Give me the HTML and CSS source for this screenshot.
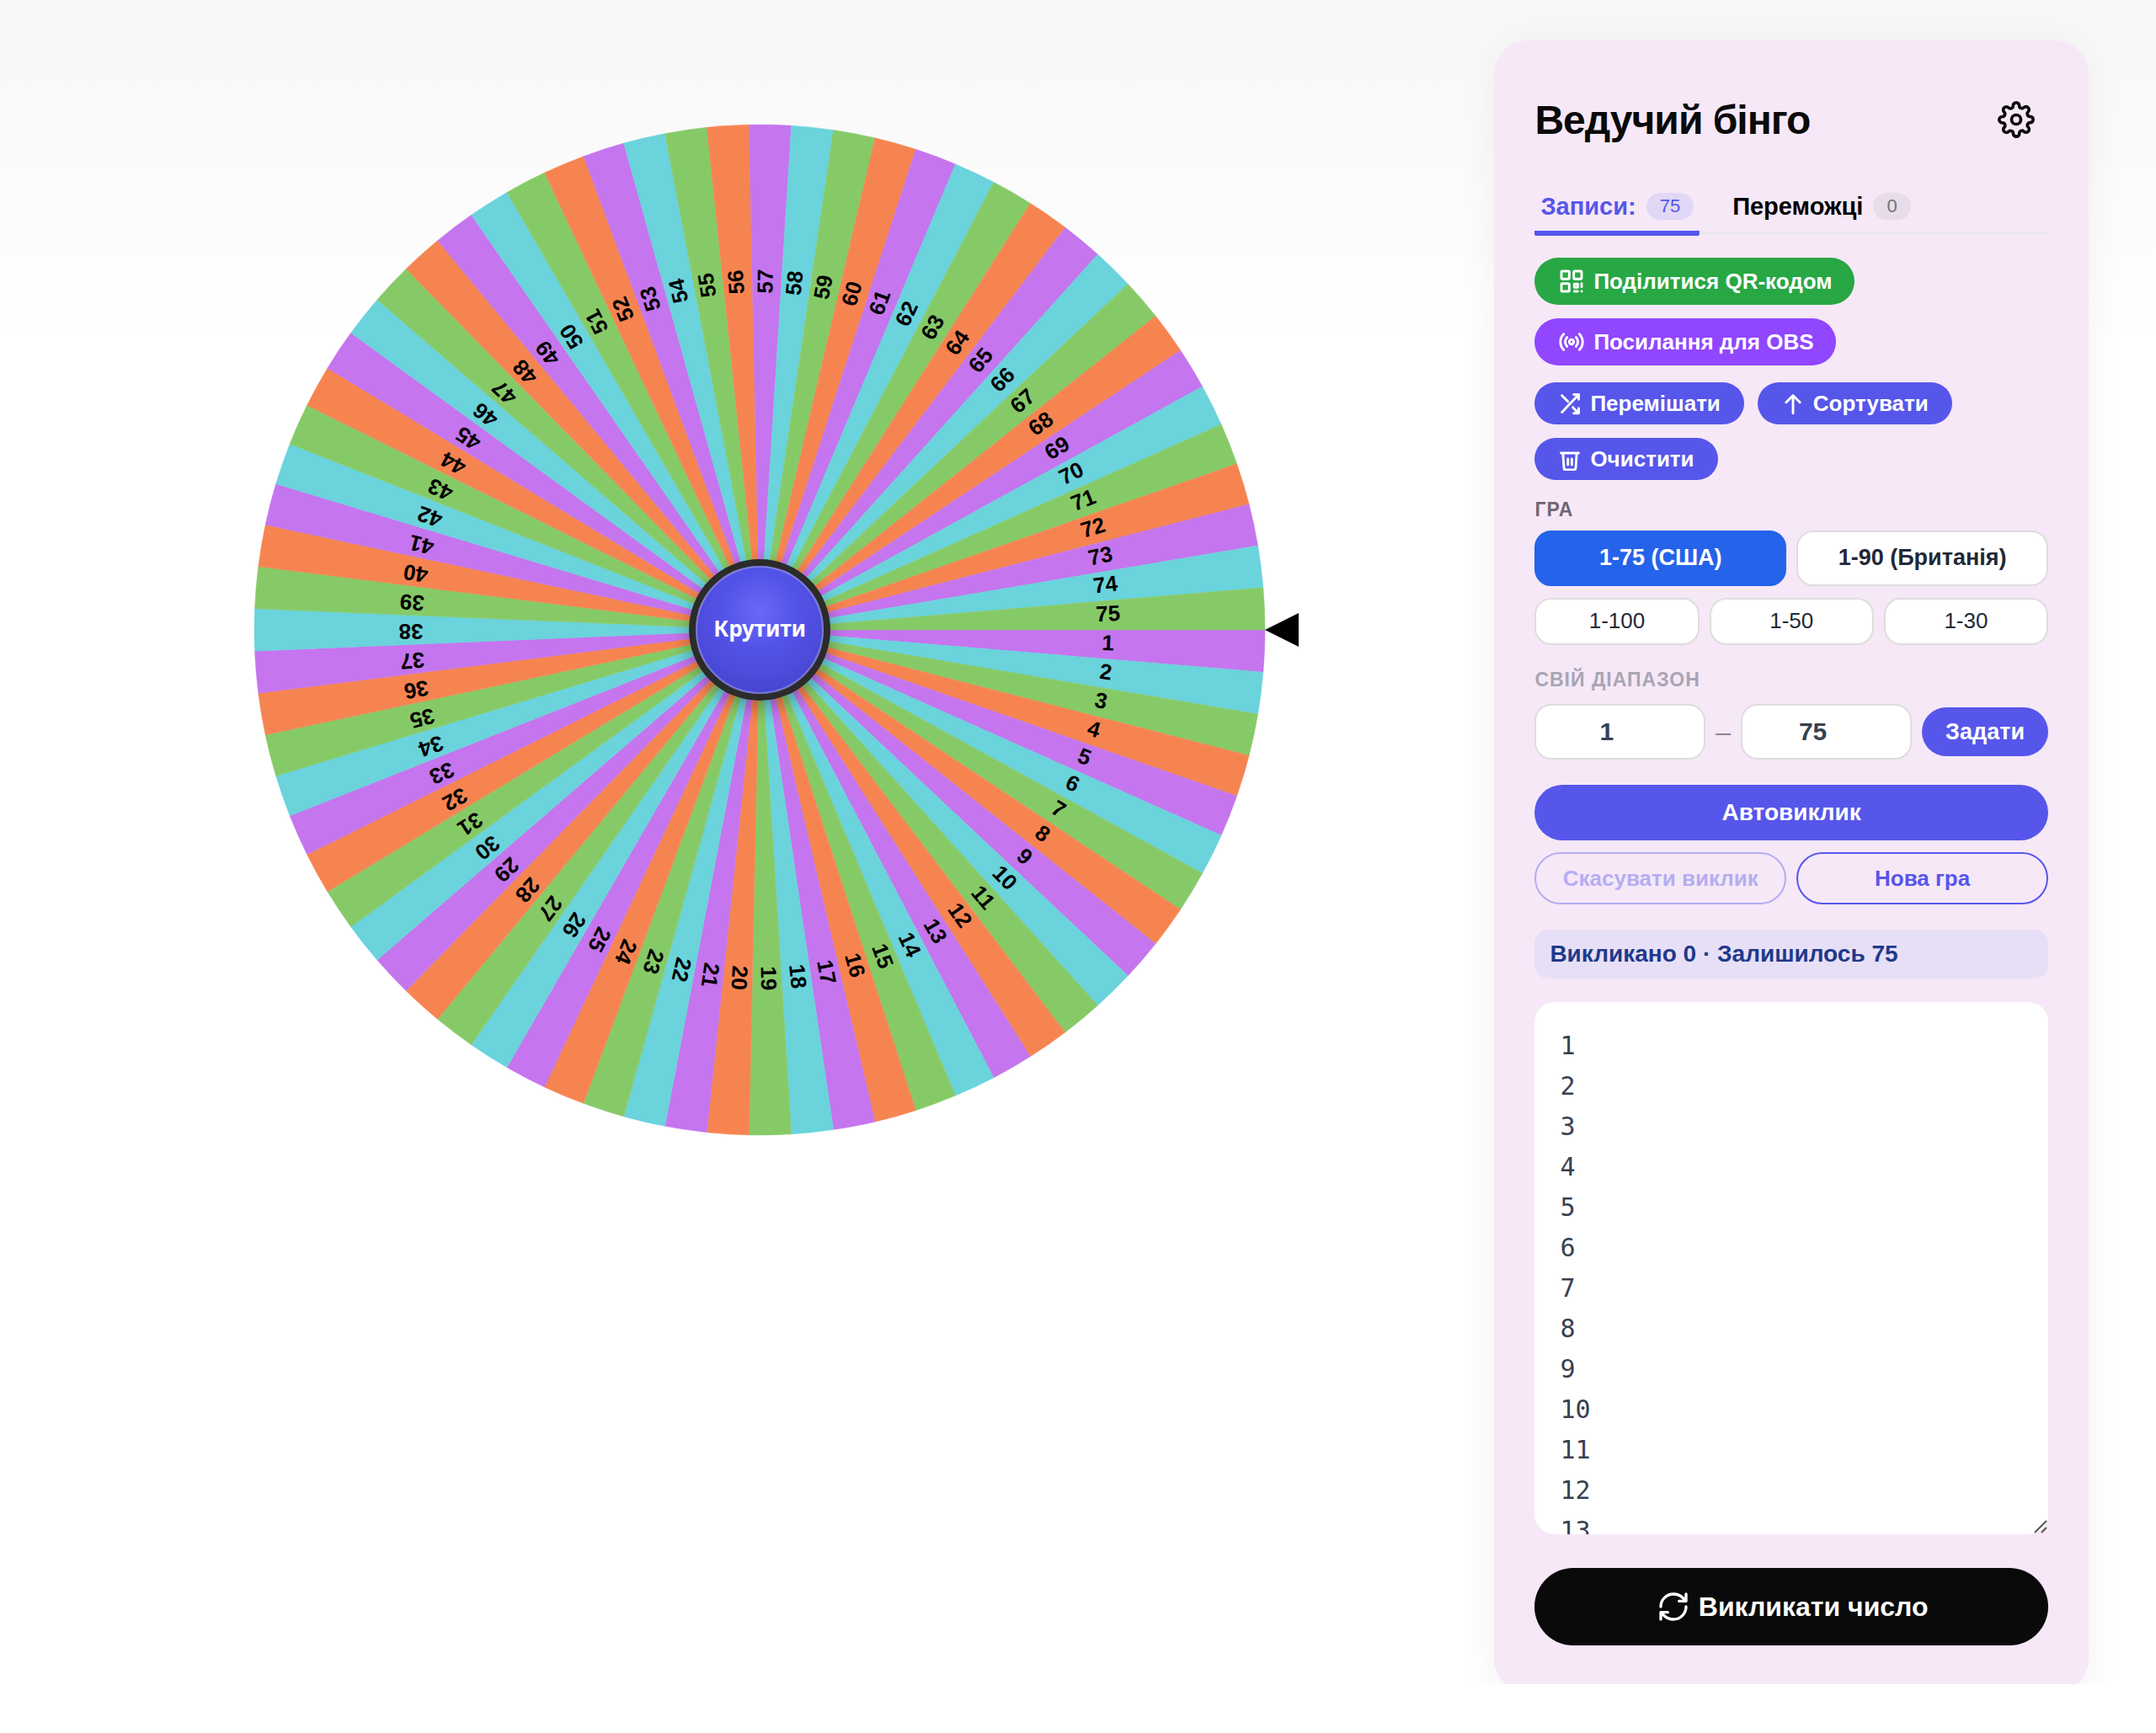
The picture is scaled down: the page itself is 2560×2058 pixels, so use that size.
FILE: index.html
```html
<!DOCTYPE html>
<html lang="uk">
	<head>
		<meta charset="UTF-8" />
		<meta name="viewport" content="width=device-width, initial-scale=1.0" />
		<title>Ведучий бінго</title>
		<link rel="stylesheet" href="styles.css">
	</head>
	<body>
		<main class="layout">
			<section class="stage">
				<div class="wheel-wrap">
					<svg class="wheel" id="wheel" viewBox="-600 -600 1200 1200">
						<g id="segments"></g>
						<path class="pointer" d="M600 0 L640 -20 L640 20 Z" />
					</svg>
					<button class="spin" type="button">Крутити</button>
				</div>
			</section>
			<aside class="panel">
				<header class="panel-header">
					<h1>Ведучий бінго</h1>
					<button class="settings" type="button" aria-label="Налаштування">
						<svg class="icon icon-gear" viewBox="0 0 24 24">
							<circle cx="12" cy="12" r="3" />
							<path d="M19.4 15a1.65 1.65 0 0 0 .33 1.82l.06.06a2 2 0 0 1 0 2.83 2 2 0 0 1-2.83 0l-.06-.06a1.65 1.65 0 0 0-1.82-.33 1.65 1.65 0 0 0-1 1.51V21a2 2 0 0 1-2 2 2 2 0 0 1-2-2v-.09A1.65 1.65 0 0 0 9 19.4a1.65 1.65 0 0 0-1.82.33l-.06.06a2 2 0 0 1-2.83 0 2 2 0 0 1 0-2.83l.06-.06a1.65 1.65 0 0 0 .33-1.82 1.65 1.65 0 0 0-1.51-1H3a2 2 0 0 1-2-2 2 2 0 0 1 2-2h.09A1.65 1.65 0 0 0 4.6 9a1.65 1.65 0 0 0-.33-1.82l-.06-.06a2 2 0 0 1 0-2.83 2 2 0 0 1 2.83 0l.06.06a1.65 1.65 0 0 0 1.82.33H9a1.65 1.65 0 0 0 1-1.51V3a2 2 0 0 1 2-2 2 2 0 0 1 2 2v.09a1.65 1.65 0 0 0 1 1.51 1.65 1.65 0 0 0 1.82-.33l.06-.06a2 2 0 0 1 2.83 0 2 2 0 0 1 0 2.83l-.06.06a1.65 1.65 0 0 0-.33 1.82V9a1.65 1.65 0 0 0 1.51 1H21a2 2 0 0 1 2 2 2 2 0 0 1-2 2h-.09a1.65 1.65 0 0 0-1.51 1z" />
						</svg>
					</button>
				</header>
				<nav class="tabs">
					<button class="tab active" type="button">Записи: <span class="badge">75</span></button>
					<button class="tab" type="button">Переможці <span class="badge">0</span></button>
				</nav>
				<div class="actions share">
					<button class="btn green" type="button">
						<svg class="icon" viewBox="0 0 24 24">
							<rect x="3" y="3" width="7" height="7" rx="1" />
							<rect x="14" y="3" width="7" height="7" rx="1" />
							<rect x="3" y="14" width="7" height="7" rx="1" />
							<path d="M14.5 14.5h3v3h-3zM21 14v3M14.5 21h3M21 21h.1" />
						</svg>
						Поділитися QR-кодом
					</button>
					<button class="btn violet" type="button">
						<svg class="icon" viewBox="0 0 24 24">
							<circle cx="12" cy="12" r="2" />
							<path d="M8 16a5.6 5.6 0 0 1 0-8M16 8a5.6 5.6 0 0 1 0 8M5 19a9.9 9.9 0 0 1 0-14M19 5a9.9 9.9 0 0 1 0 14" />
						</svg>
						Посилання для OBS
					</button>
				</div>
				<div class="actions list-tools">
					<button class="btn small" type="button">
						<svg class="icon" viewBox="0 0 24 24">
							<path d="M16 3h5v5M4 21L21 3M21 17v5h-5M15 16l6 6M4 4l6 6" />
						</svg>
						Перемішати
					</button>
					<button class="btn small" type="button">
						<svg class="icon" viewBox="0 0 24 24">
							<path d="M12 22V4M5 11l7-7 7 7" />
						</svg>
						Сортувати
					</button>
					<button class="btn small" type="button">
						<svg class="icon" viewBox="0 0 24 24">
							<path d="M3 6h18M5 6l1 15a2 2 0 0 0 2 2h8a2 2 0 0 0 2-2l1-15M10 12v6M14 12v6" />
						</svg>
						Очистити
					</button>
				</div>
				<h2 class="caption">Гра</h2>
				<div class="presets two first">
					<button class="preset main selected" type="button">1-75 (США)</button>
					<button class="preset main" type="button">1-90 (Британія)</button>
				</div>
				<div class="presets three">
					<button class="preset" type="button">1-100</button>
					<button class="preset" type="button">1-50</button>
					<button class="preset" type="button">1-30</button>
				</div>
				<h2 class="caption muted">Свій діапазон</h2>
				<div class="range">
					<input type="number" id="from" aria-label="Від" value="1" />
					<span class="dash">–</span>
					<input type="number" id="to" aria-label="До" value="75" />
					<button class="btn set" type="button">Задати</button>
				</div>
				<button class="btn auto" type="button">Автовиклик</button>
				<div class="presets two">
					<button class="outline" type="button" disabled>Скасувати виклик</button>
					<button class="outline" type="button">Нова гра</button>
				</div>
				<p class="status">Викликано 0 · Залишилось 75</p>
				<div class="entries">
					<textarea id="entries" aria-label="Записи"></textarea>
					<svg class="grip" viewBox="0 0 16 16">
						<path d="M1 15L15 1M9 15L15 9" />
					</svg>
				</div>
				<button class="btn call" type="button">
					<svg class="icon" viewBox="0 0 24 24">
						<path d="M3 12a9 9 0 0 1 9-9 9.75 9.75 0 0 1 6.74 2.74L21 8M21 3v5h-5" />
						<path d="M21 12a9 9 0 0 1-9 9 9.75 9.75 0 0 1-6.74-2.74L3 16M8 16H3v5" />
					</svg>
					Викликати число
				</button>
			</aside>
		</main>
		<script src="script.js"></script>
	</body>
</html>
```
FILE: styles.css
```css
* {
	box-sizing: border-box;
}
body {
	margin: 0;
	min-height: 100vh;
	font-family: "Liberation Sans", Arial, sans-serif;
	color: #0a0a0a;
	background: #fff linear-gradient(#f7f7f7, #fff 400px) no-repeat;
}
button,
input,
textarea {
	font-family: inherit;
	margin: 0;
}
button {
	cursor: pointer;
}
h1,
h2,
p {
	margin: 0;
}
.layout {
	display: grid;
	grid-template-columns: 7fr 3fr;
	gap: 48px;
	align-items: start;
	padding: 48px 80px 0;
	max-height: calc(100vh - 58px);
	overflow: hidden;
}

/* wheel */
.stage {
	display: flex;
	justify-content: center;
	padding: 100px 2px 0 0;
}
.wheel-wrap {
	display: grid;
	place-items: center;
	width: 73%;
	max-width: 1200px;
}
.wheel-wrap > * {
	grid-area: 1 / 1;
}
.wheel {
	display: block;
	width: 100%;
	overflow: visible;
}
.wheel text {
	font-size: 26px;
	font-weight: bold;
	text-anchor: middle;
	dominant-baseline: middle;
}
.spin {
	z-index: 1;
	width: 168px;
	height: 168px;
	padding: 0 0 4px;
	border: 8px solid #2b2b2b;
	border-radius: 50%;
	background: radial-gradient(circle at 50% 35%, #6a68f6, #5453e9 35%, #4140c6) padding-box;
	box-shadow: inset 0 0 0 2px rgba(255, 255, 255, 0.25), 0 8px 24px rgba(0, 0, 0, 0.3);
	color: #fff;
	font-family: "Noto Sans", sans-serif;
	font-size: 26px;
	font-weight: bold;
}

/* side panel */
.panel {
	display: flex;
	flex-direction: column;
	padding: 48px 48px 56px;
	border-radius: 40px;
	background: #f6e8f7;
	box-shadow: 0 8px 48px rgba(0, 0, 0, 0.06);
}
.panel-header {
	display: flex;
	justify-content: space-between;
	align-items: center;
	height: 92px;
	padding-right: 16px;
}
h1 {
	font-size: 48px;
	letter-spacing: -1px;
}
.settings {
	display: flex;
	padding: 0;
	border: 0;
	background: none;
	color: #0a0a0a;
}
.icon {
	flex: none;
	width: 32px;
	height: 32px;
	fill: none;
	stroke: currentColor;
	stroke-width: 2;
	stroke-linecap: round;
	stroke-linejoin: round;
}
.icon-gear {
	width: 44px;
	height: 44px;
}
.tabs {
	display: flex;
	gap: 32px;
	margin-top: 24px;
	border-bottom: 2px solid #e5e7eb;
}
.tab {
	display: flex;
	align-items: center;
	gap: 12px;
	height: 68px;
	margin-bottom: -4px;
	padding: 0 7px 2px;
	border: 0;
	background: none;
	color: #000;
	font-size: 29px;
	font-weight: bold;
}
.tab.active {
	color: #5656eb;
	background: linear-gradient(#5656eb, #5656eb) bottom / 100% 6px no-repeat;
	border-radius: 0 0 2px 2px;
}
.badge {
	padding: 0 16px;
	border-radius: 16px;
	background: #e8dcea;
	color: #6b7280;
	font-size: 22px;
	font-weight: normal;
	line-height: 32px;
}
.active .badge {
	background: #e1d7f6;
	color: #5656eb;
}
.actions {
	display: flex;
	flex-wrap: wrap;
	gap: 16px;
}
.share {
	flex-direction: column;
	align-items: flex-start;
	margin-top: 28px;
}
.list-tools {
	margin-top: 20px;
}
.btn {
	display: flex;
	justify-content: center;
	align-items: center;
	gap: 10px;
	height: 56px;
	padding: 0 26px 0 28px;
	border: 0;
	border-radius: 48px;
	background: #5656eb;
	color: #fff;
	font-size: 26px;
	font-weight: bold;
}
.green {
	background: #28a745;
}
.violet {
	background: #9146ff;
}
.share .icon {
	stroke-width: 2.2;
}
.small {
	height: 50px;
	padding: 0 28px;
}
.small .icon {
	width: 28px;
	height: 28px;
	stroke-width: 2.5;
}
.caption {
	margin-top: 22px;
	color: #6f6673;
	font-size: 23px;
	line-height: 26px;
	letter-spacing: 1px;
	text-transform: uppercase;
}
.muted {
	margin-top: 28px;
	color: #a9a5b4;
}
.presets {
	display: grid;
	gap: 12px;
	margin-top: 14px;
}
.first {
	margin-top: 12px;
}
.two {
	grid-template-columns: 1fr 1fr;
}
.three {
	grid-template-columns: 1fr 1fr 1fr;
}
.preset {
	height: 56px;
	padding: 0 0 2px;
	border: 2px solid #ddd;
	border-radius: 20px;
	background: #fff;
	color: #1f2937;
	font-size: 26px;
}
.main {
	height: 66px;
	font-size: 27px;
	font-weight: bold;
}
.selected {
	border-color: #2563eb;
	background: #2563eb;
	color: #fff;
}
.range {
	display: flex;
	align-items: center;
	gap: 12px;
	margin-top: 16px;
}
.range input {
	flex: 1;
	width: 0;
	height: 66px;
	padding: 0 48px 0 16px;
	border: 2px solid #ddd;
	border-radius: 20px;
	background: #fff;
	color: #374151;
	font-size: 30px;
	font-weight: bold;
	text-align: center;
	appearance: textfield;
}
.range input::-webkit-inner-spin-button {
	display: none;
}
.dash {
	color: #8b8291;
	font-size: 32px;
}
.set {
	height: 58px;
	padding: 0 28px;
	font-size: 27px;
}
.auto {
	height: 66px;
	margin-top: 30px;
	padding: 0;
	font-size: 28px;
}
.outline {
	height: 62px;
	padding: 0;
	border: 2px solid #5656eb;
	border-radius: 31px;
	background: none;
	color: #5656eb;
	font-size: 26px;
	font-weight: bold;
}
.outline:disabled {
	opacity: 0.4;
	cursor: default;
}
.status {
	margin-top: 30px;
	padding: 0 18px;
	border-radius: 16px;
	background: #e7dff6;
	color: #1e3a8a;
	font-size: 28px;
	font-weight: bold;
	line-height: 58px;
}
.entries {
	position: relative;
	margin-top: 28px;
}
textarea {
	display: block;
	width: 100%;
	height: 632px;
	padding: 28px 30px;
	border: 0;
	border-radius: 24px;
	background: #fff;
	color: #374151;
	font-family: "DejaVu Sans Mono", monospace;
	font-size: 30px;
	line-height: 48px;
	resize: none;
	scrollbar-width: none;
}
.grip {
	position: absolute;
	right: 1px;
	bottom: 1px;
	width: 16px;
	height: 16px;
	fill: none;
	stroke: #555;
	stroke-width: 2;
	pointer-events: none;
}
.call {
	height: 92px;
	margin-top: 40px;
	background: #0a0a0a;
	font-size: 32px;
}
.call .icon {
	width: 40px;
	height: 40px;
}
```
FILE: script.js
```js
const colors = ["#c575ee", "#6ad3dc", "#86ca68", "#f68451"];
const total = 75;
const radius = 600;
const step = 360 / total;
const segments = document.getElementById("segments");
const entries = document.getElementById("entries");

const point = (deg) => {
	const rad = (deg * Math.PI) / 180;
	return `${(radius * Math.cos(rad)).toFixed(2)} ${(radius * Math.sin(rad)).toFixed(2)}`;
};

let markup = "";
let numbers = "";
for (let i = 0; i < total; i++) {
	const color = colors[i % colors.length];
	markup += `<path fill="${color}" stroke="${color}" stroke-width="0.5" d="M0 0 L${point(i * step)} A${radius} ${radius} 0 0 1 ${point((i + 1) * step)} Z" />`;
	numbers += `<text x="414" y="0" transform="rotate(${(i + 0.5) * step})">${i + 1}</text>`;
}
segments.innerHTML = markup + numbers;

entries.value = Array.from({ length: total }, (_, i) => i + 1).join("\n");
```
